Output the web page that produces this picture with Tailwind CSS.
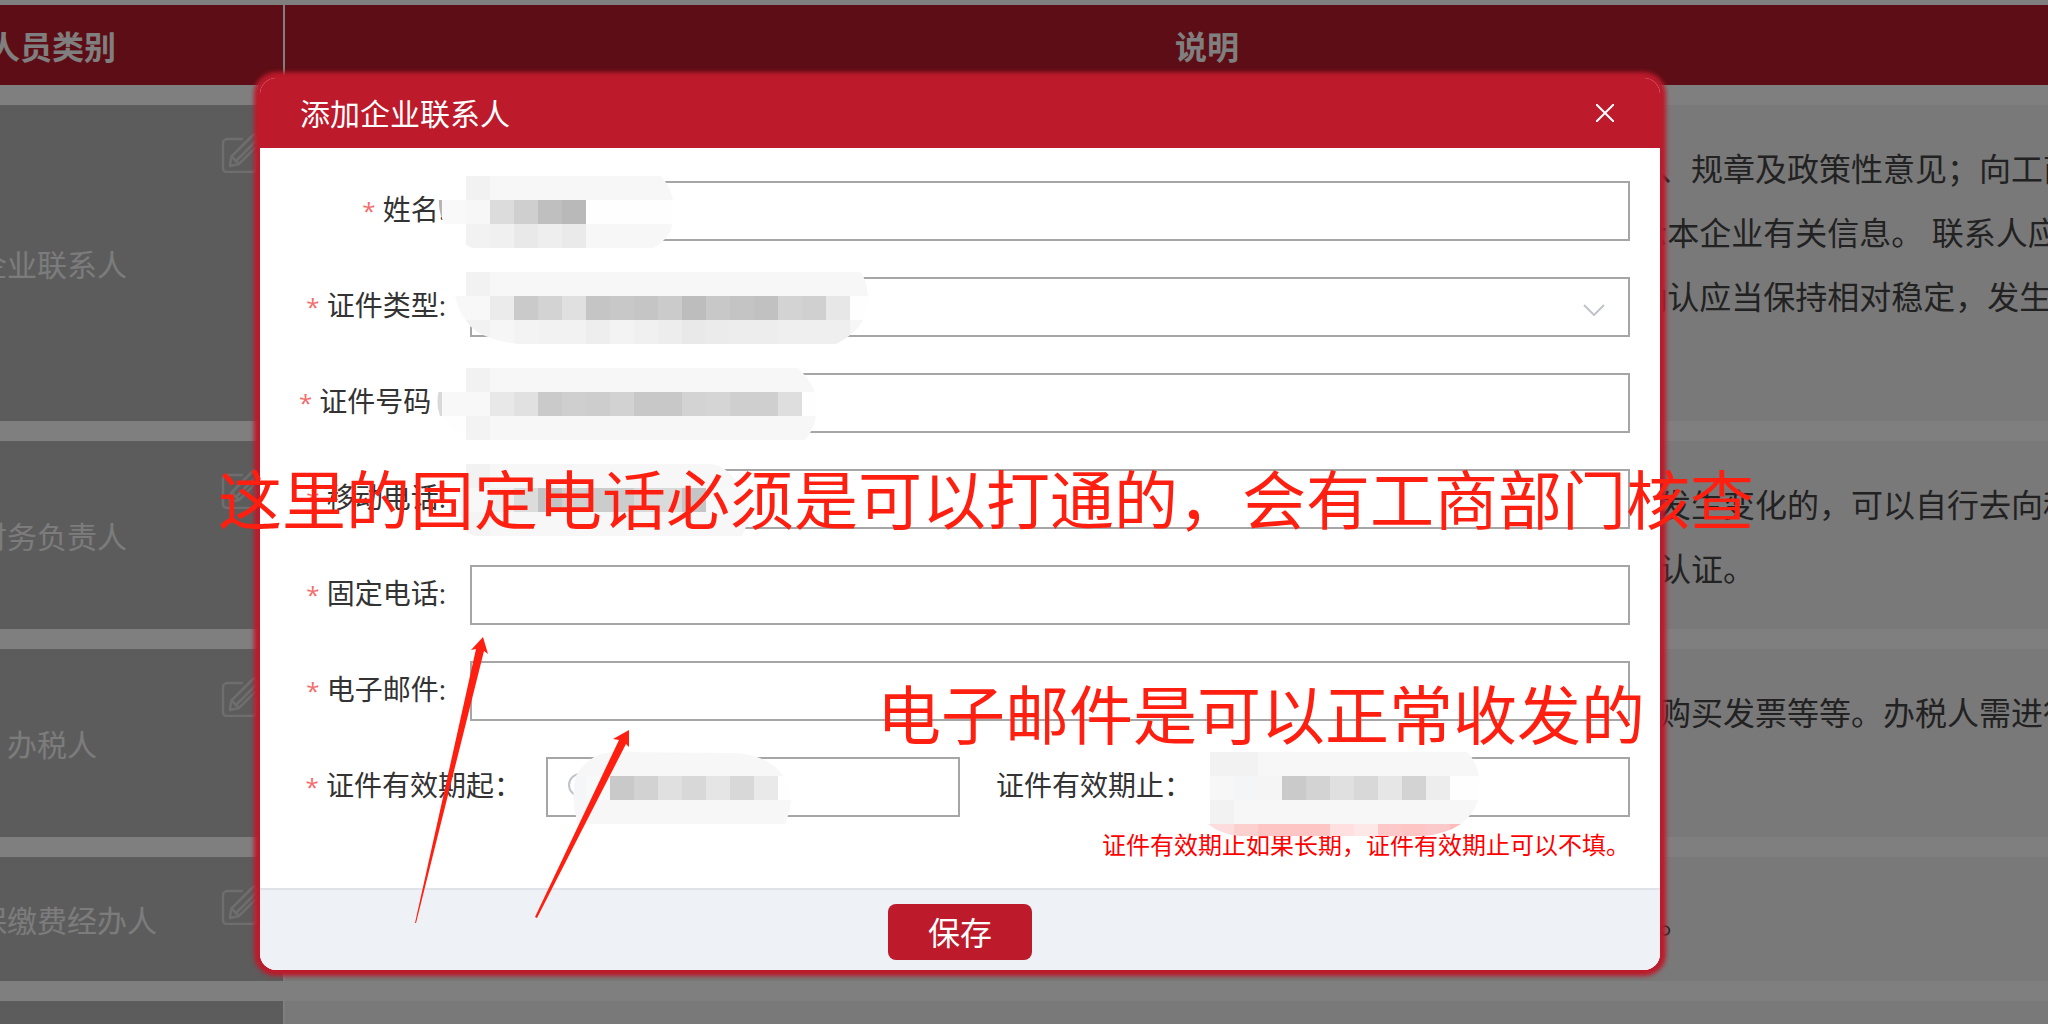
<!DOCTYPE html>
<html lang="zh-CN">
<head>
    <meta charset="UTF-8">
    <meta name="viewport" content="width=device-width, initial-scale=1.0">
    <title>添加企业联系人</title>
    <script src="https://cdn.jsdelivr.net/npm/@tailwindcss/browser@4"></script>
</head>
<body class="relative h-screen overflow-hidden bg-white font-['Open_Sans','Noto_Sans_CJK_SC',sans-serif] text-[#333]">
    <svg class="hidden">
        <symbol id="icon-edit" viewBox="0 0 40 40" fill="none" stroke="currentColor" stroke-width="2.5" stroke-linejoin="round" stroke-linecap="round">
            <path d="M21 6H6a4 4 0 0 0-4 4v25a4 4 0 0 0 4 4h25a4 4 0 0 0 4-4V21"/>
            <path d="M9 33l1-9L33 1l7 8-22 22-9 2zM11 24l7 7M15 28L36 7"/>
        </symbol>
    </svg>

    <!-- Page behind the dialog -->
    <div class="-ml-[181px] -mr-[83px] -mt-[15px]">
        <table class="w-full table-fixed border-separate border-spacing-x-[2px] border-spacing-y-[20px]">
            <thead>
                <tr class="h-20 bg-[#bb1a2a] text-[32px] leading-[48px] font-bold text-white">
                    <th class="w-[462px] pt-1">人员类别</th>
                    <th class="pt-1">说明</th>
                </tr>
            </thead>
            <tbody class="text-[32px] leading-[64px] whitespace-nowrap text-[#444]">
                <tr>
                    <td class="relative bg-[#b8b8b8] pt-1 text-center text-[30px] text-white/90">
                        企业联系人
                        <svg class="absolute top-7 right-[22px] size-10 text-white/50"><use href="#icon-edit"/></svg>
                    </td>
                    <td class="bg-[#f2f2f2] pt-8 pb-7 pl-[1342px]">
                        规、规章及政策性意见；向工商部门<br>
                        &nbsp;示本企业有关信息。&nbsp;联系人应当<br>
                        &nbsp;确认应当保持相对稳定，发生变化<br>
                        &nbsp;
                    </td>
                </tr>
                <tr>
                    <td class="relative bg-[#b8b8b8] pt-1 text-center text-[30px] text-white/90">
                        财务负责人
                        <svg class="absolute top-7 right-[22px] size-10 text-white/50"><use href="#icon-edit"/></svg>
                    </td>
                    <td class="bg-[#f2f2f2] pt-8 pb-7 pl-[1342px]">
                        人发生变化的，可以自行去向税务局<br>
                        名认证。
                    </td>
                </tr>
                <tr>
                    <td class="relative bg-[#b8b8b8] pt-1 text-center text-[30px] text-white/90">
                        办税人
                        <svg class="absolute top-7 right-[22px] size-10 text-white/50"><use href="#icon-edit"/></svg>
                    </td>
                    <td class="bg-[#f2f2f2] pt-8 pb-7 pl-[1342px]">
                        、购买发票等等。办税人需进行实名<br>
                        &nbsp;
                    </td>
                </tr>
                <tr>
                    <td class="relative bg-[#b8b8b8] pt-1 text-center text-[30px] text-white/90">
                        社保缴费经办人
                        <svg class="absolute top-7 right-[22px] size-10 text-white/50"><use href="#icon-edit"/></svg>
                    </td>
                    <td class="bg-[#f2f2f2] pt-8 pb-7 pl-[1342px]">人。</td>
                </tr>
                <tr>
                    <td class="bg-[#b8b8b8]"></td>
                    <td class="bg-[#f2f2f2] pt-8 pb-7 pl-[1342px]">&nbsp;</td>
                </tr>
            </tbody>
        </table>
    </div>

    <!-- Dialog -->
    <div class="absolute inset-0 bg-black/50 pt-[78px] pr-[388px] pl-[260px]">
        <form role="dialog" aria-labelledby="dialogTitle" class="overflow-hidden rounded-2xl bg-white shadow-[0_0_4px_6px_#bd1a2b]">
            <header class="flex h-[70px] items-center justify-between bg-[#bd1a2b] pr-[46px] pl-10 text-white">
                <h2 id="dialogTitle" class="pt-[2px] text-[30px] leading-10">添加企业联系人</h2>
                <button type="button" aria-label="关闭">
                    <svg class="size-[18px]" viewBox="0 0 18 18" stroke="currentColor" stroke-width="2"><path d="M0 0l18 18M18 0L0 18"/></svg>
                </button>
            </header>

            <div class="pt-[33px] pr-[30px] pb-[29px] text-[28px] leading-[56px]">
                <div class="flex flex-col gap-9">
                    <div class="flex">
                        <label for="name" class="w-[210px] shrink-0 pr-6 text-right whitespace-nowrap"><span class="text-2xl leading-none text-[#f56c6c]">*</span> 姓名:</label>
                        <div class="relative grow">
                            <input id="name" type="text" class="block h-[60px] w-full border-2 border-[#a6a6a6] bg-white px-4">
                            <svg class="absolute -top-[5px] -left-[34px] h-[84px] w-[460px]">
                                <clipPath id="clipName"><path d="M4 12Q0 36 10 50L30 69L36 72H218Q236 60 236 48L237 24Q234 10 225 0H30V12z"/></clipPath>
                                <g data-mosaic="name" clip-path="url(#clipName)"></g>
                            </svg>
                        </div>
                    </div>

                    <div class="flex">
                        <label for="idType" class="w-[210px] shrink-0 pr-6 text-right whitespace-nowrap"><span class="text-2xl leading-none text-[#f56c6c]">*</span> 证件类型:</label>
                        <div class="relative grow">
                            <select id="idType" class="block h-[60px] w-full appearance-none border-2 border-[#a6a6a6] bg-white px-4"><option></option></select>
                            <svg class="pointer-events-none absolute top-[27px] right-[25px] h-3 w-[22px]" viewBox="0 0 22 12" fill="none" stroke="#c0c4cc" stroke-width="2"><path d="M1 1l10 10L21 1"/></svg>
                            <svg class="absolute -top-[5px] -left-[34px] h-[84px] w-[460px]">
                                <clipPath id="clipType"><path d="M19 24Q22 40 34 54Q48 68 82 72H400Q420 62 427 48L432 24Q431 10 425 0H30V24z"/></clipPath>
                                <g data-mosaic="idType" clip-path="url(#clipType)"></g>
                            </svg>
                        </div>
                    </div>

                    <div class="flex">
                        <label for="idNumber" class="w-[210px] shrink-0 pr-6 text-right whitespace-nowrap"><span class="text-2xl leading-none text-[#f56c6c]">*</span> 证件号码&nbsp;:</label>
                        <div class="relative grow">
                            <input id="idNumber" type="text" class="block h-[60px] w-full border-2 border-[#a6a6a6] bg-white px-4">
                            <svg class="absolute -top-[5px] -left-[34px] h-[84px] w-[460px]">
                                <clipPath id="clipNumber"><path d="M6 12Q-2 32 4 48L30 72H369Q378 62 380 48L379 24Q372 8 361 0H30V12z"/></clipPath>
                                <g data-mosaic="idNumber" clip-path="url(#clipNumber)"></g>
                            </svg>
                        </div>
                    </div>

                    <div class="flex">
                        <label for="mobile" class="w-[210px] shrink-0 pr-6 text-right whitespace-nowrap"><span class="text-2xl leading-none text-[#f56c6c]">*</span> 移动电话:</label>
                        <div class="relative grow">
                            <input id="mobile" type="text" class="block h-[60px] w-full border-2 border-[#a6a6a6] bg-white px-4">
                            <svg class="absolute -top-[5px] -left-[34px] h-[84px] w-[460px]">
                                <clipPath id="clipMobile"><path d="M22 24L24 48L30 68L40 72H306L312 58L308 30Q296 4 276 0H30V24z"/></clipPath>
                                <g data-mosaic="mobile" clip-path="url(#clipMobile)"></g>
                            </svg>
                        </div>
                    </div>

                    <div class="flex">
                        <label for="phone" class="w-[210px] shrink-0 pr-6 text-right whitespace-nowrap"><span class="text-2xl leading-none text-[#f56c6c]">*</span> 固定电话:</label>
                        <input id="phone" type="text" class="block h-[60px] grow border-2 border-[#a6a6a6] bg-white px-4">
                    </div>

                    <div class="flex">
                        <label for="email" class="w-[210px] shrink-0 pr-6 text-right whitespace-nowrap"><span class="text-2xl leading-none text-[#f56c6c]">*</span> 电子邮件:</label>
                        <input id="email" type="text" class="block h-[60px] grow border-2 border-[#a6a6a6] bg-white px-4">
                    </div>

                    <div class="flex">
                        <label for="validFrom" class="w-[286px] shrink-0 pr-6 text-right whitespace-nowrap"><span class="text-2xl leading-none text-[#f56c6c]">*</span> 证件有效期起：</label>
                        <div class="relative flex-1">
                            <input id="validFrom" type="text" class="block h-[60px] w-full border-2 border-[#a6a6a6] bg-white px-4">
                            <svg class="absolute top-4 left-[21px] size-[26px]" viewBox="0 0 26 26" fill="none" stroke="#c0c4cc" stroke-width="2"><circle cx="13" cy="12" r="11"/><path d="M13 6v7h6"/></svg>
                            <svg class="absolute -top-[5px] left-4 h-[84px] w-[260px]">
                                <clipPath id="clipFrom"><path d="M14 24Q26 2 50 0L170 1Q206 2 221 24L229 48Q228 60 223 72H16Q8 46 14 24z"/></clipPath>
                                <g data-mosaic="validFrom" clip-path="url(#clipFrom)"></g>
                            </svg>
                        </div>
                        <label for="validTo" class="w-[256px] shrink-0 pr-6 text-right whitespace-nowrap">证件有效期止：</label>
                        <div class="relative flex-1">
                            <input id="validTo" type="text" class="block h-[60px] w-full border-2 border-[#a6a6a6] bg-white px-4">
                            <svg class="absolute -top-[5px] -left-[10px] h-[86px] w-[280px]">
                                <clipPath id="clipTo"><path d="M4 0H261Q270 8 273 24L272 48Q268 62 255 72Q240 82 218 84H34Q14 82 2 72H4z"/></clipPath>
                                <g data-mosaic="validTo" clip-path="url(#clipTo)"></g>
                            </svg>
                        </div>
                    </div>
                </div>
                <p class="mt-[14px] text-right text-2xl leading-7 text-[#f00]">证件有效期止如果长期，证件有效期止可以不填。</p>
            </div>

            <footer class="flex justify-center border-t-2 border-[#dfe2e8] bg-[#eef1f6] pt-[14px] pb-[10px]">
                <button type="button" class="h-14 w-36 rounded-lg bg-[#bd1a2b] pt-[2px] text-[32px] leading-[54px] text-white">保存</button>
            </footer>
        </form>
    </div>

    <!-- Notes written over the page -->
    <p class="absolute top-[452px] left-[218px] text-[64px] leading-[96px] whitespace-nowrap text-[#ff1f10]">这里的固定电话必须是可以打通的，会有工商部门核查</p>
    <p class="absolute top-[667px] left-[877px] text-[64px] leading-[96px] whitespace-nowrap text-[#ff1f10]">电子邮件是可以正常收发的</p>
    <svg class="absolute top-[637px] left-[415px] h-[288px] w-[74px]" fill="#ff1f10"><path d="M68 0L56 13L61 12L0 286H1L69 14L73 17z"/></svg>
    <svg class="absolute top-[730px] left-[535px] h-[190px] w-24" fill="#ff1f10"><path d="M94 0L78 9L84 10L0 187L2 188L91 14L94 17z"/></svg>

    <script>
        // Each row: y, height, then [x, width, colour] cells
        const mosaics = {
            name: [
                [0, 24, [[30, 24, '#f2f2f2'], [54, 190, '#f7f7f7']]],
                [24, 24, [[0, 6, '#b5b5b5'], [6, 24, '#f9f9f9'], [30, 24, '#f7f7f7'], [54, 24, '#dcdcdc'], [78, 24, '#cfcfcf'], [102, 24, '#bfbfbf'], [126, 24, '#b9b9b9'], [150, 94, '#fefefe']]],
                [48, 24, [[30, 24, '#f2f2f2'], [54, 24, '#f0f0f0'], [78, 24, '#e9e9e9'], [102, 24, '#eeeeee'], [126, 24, '#eaeaea'], [150, 94, '#f7f7f7']]]
            ],
            idType: [
                [0, 24, [[30, 24, '#f2f2f2'], [54, 390, '#f7f7f7']]],
                [24, 24, [[6, 48, '#f8f8f8'], [54, 24, '#ebebeb'], [78, 24, '#cacaca'], [102, 24, '#d3d3d3'], [126, 24, '#e0e0e0'], [150, 24, '#c5c5c5'], [174, 24, '#c8c8c8'], [198, 24, '#c5c5c5'], [222, 24, '#cbcbcb'], [246, 24, '#bdbdbd'], [270, 24, '#c8c8c8'], [294, 24, '#c4c4c4'], [318, 24, '#c1c1c1'], [342, 24, '#d3d3d3'], [366, 24, '#d0d0d0'], [390, 24, '#e7e7e7'], [414, 24, '#fefefe']]],
                [48, 24, [[30, 24, '#f2f2f2'], [54, 24, '#f6f6f6'], [78, 24, '#f3f3f3'], [102, 48, '#f2f2f2'], [150, 24, '#eeeeee'], [174, 24, '#f3f3f3'], [198, 24, '#f0f0f0'], [222, 24, '#ededed'], [246, 24, '#e9e9e9'], [270, 24, '#ebebeb'], [294, 48, '#ededed'], [342, 72, '#efefef'], [414, 24, '#f6f6f6']]]
            ],
            idNumber: [
                [0, 24, [[30, 24, '#f2f2f2'], [54, 340, '#f7f7f7']]],
                [24, 24, [[0, 6, '#d9d9d9'], [6, 48, '#f8f8f8'], [54, 24, '#e8e8e8'], [78, 24, '#e1e1e1'], [102, 24, '#cacaca'], [126, 24, '#cfcfcf'], [150, 24, '#cdcdcd'], [174, 24, '#d2d2d2'], [198, 48, '#c8c8c8'], [246, 24, '#d3d3d3'], [270, 24, '#d5d5d5'], [294, 48, '#cfcfcf'], [342, 24, '#dedede'], [366, 24, '#fefefe']]],
                [48, 24, [[0, 30, '#fefefe'], [30, 24, '#f3f3f3'], [54, 340, '#f7f7f7']]]
            ],
            mobile: [
                [0, 24, [[30, 24, '#f2f2f2'], [54, 270, '#f7f7f7']]],
                [24, 24, [[6, 48, '#f8f8f8'], [54, 24, '#efefef'], [78, 24, '#dcdcdc'], [102, 24, '#c2c2c2'], [126, 24, '#d0d0d0'], [150, 48, '#cccccc'], [198, 24, '#dadada'], [222, 24, '#dadada'], [246, 24, '#c5c5c5'], [270, 50, '#f8f8f8']]],
                [48, 24, [[6, 48, '#f4f4f4'], [54, 270, '#f7f7f7']]]
            ],
            validFrom: [
                [0, 24, [[0, 260, '#f7f7f7']]],
                [24, 24, [[0, 24, '#f5f6f7'], [24, 24, '#f8fafa'], [48, 24, '#c9c9c9'], [72, 24, '#d2d2d2'], [96, 24, '#e0e0e0'], [120, 24, '#d8d8d8'], [144, 24, '#e5e5e5'], [168, 24, '#d8d8d8'], [192, 24, '#e9e9e9'], [216, 30, '#fefefe']]],
                [48, 24, [[0, 260, '#f7f7f7']]]
            ],
            validTo: [
                [0, 24, [[4, 48, '#f2f2f2'], [52, 224, '#f7f7f7']]],
                [24, 24, [[4, 24, '#f7f7f7'], [28, 24, '#f3f5f7'], [52, 24, '#f5f5f5'], [76, 24, '#cacaca'], [100, 24, '#d3d3d3'], [124, 24, '#e0e0e0'], [148, 24, '#d8d8d8'], [172, 24, '#e6e6e6'], [196, 24, '#d3d3d3'], [220, 24, '#ededed'], [244, 32, '#fefefe']]],
                [48, 24, [[4, 24, '#f2f2f2'], [28, 248, '#f7f7f7']]],
                [72, 12, [[0, 28, '#fcdcdc'], [28, 24, '#fdd0d0'], [52, 72, '#fec5c5'], [124, 24, '#ffdfdf'], [148, 24, '#fde7e7'], [172, 24, '#fcc8c8'], [196, 24, '#fec5c5'], [220, 24, '#fcc9cb'], [244, 32, '#ffbbbb']]]
            ]
        };

        document.querySelectorAll('[data-mosaic]').forEach(group => {
            mosaics[group.dataset.mosaic].forEach(([y, height, cells]) => {
                cells.forEach(([x, width, fill]) => {
                    const rect = document.createElementNS('http://www.w3.org/2000/svg', 'rect');
                    Object.entries({ x, y, width, height, fill }).forEach(([key, value]) => rect.setAttribute(key, value));
                    group.appendChild(rect);
                });
            });
        });
    </script>
</body>
</html>
